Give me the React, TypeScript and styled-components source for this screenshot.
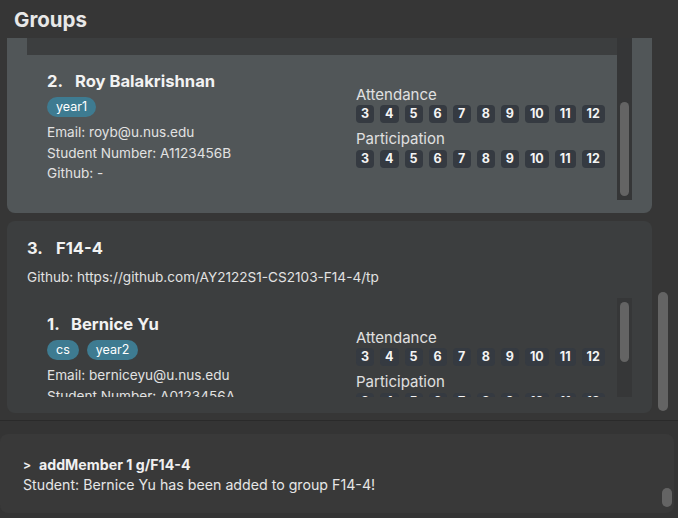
import React from 'react';
import styled, { createGlobalStyle } from 'styled-components';

const GlobalStyle = createGlobalStyle`
  html, body { margin: 0; padding: 0; background: #363636; }
  body { font-family: Inter, "Noto Sans", sans-serif; }
  * { box-sizing: border-box; }
`;

const Window = styled.div`
  width: 678px;
  height: 518px;
  display: flex;
  flex-direction: column;
  background: #363636;
  overflow: hidden;
  color: #e4e4e4;
`;

const Header = styled.div`
  height: 38px;
  flex: none;
  display: flex;
  align-items: center;
  padding-left: 14px;
  font-size: 20.5px;
  font-weight: 700;
  color: #e8e8e8;
`;

const ListViewport = styled.div`
  height: 382px;
  flex: none;
  display: flex;
  overflow: hidden;
`;

const Cards = styled.div`
  width: 652px;
  flex: none;
  padding-left: 7px;
  display: flex;
  flex-direction: column;
  gap: 8px;
`;

type Tone = 'odd' | 'even';
const toneBg = (t: Tone) => (t === 'odd' ? '#515658' : '#3c3e3f');

const GroupCard = styled.div<{ $tone: Tone; $clippedTop?: boolean }>`
  flex: none;
  background: ${(p) => toneBg(p.$tone)};
  border-radius: ${(p) => (p.$clippedTop ? '0 0 8px 8px' : '8px')};
  padding: ${(p) => (p.$clippedTop ? '0 20px 13px' : '17px 20px 16px')};
  display: flex;
  flex-direction: column;
`;

const GroupTitle = styled.div`
  font-size: 16.5px;
  line-height: 20px;
  font-weight: 700;
  color: #f2f2f2;
  display: flex;
`;

const Index = styled.span<{ $w: number }>`
  display: inline-block;
  width: ${(p) => p.$w}px;
`;

const GroupGithub = styled.div`
  font-size: 13.6px;
  line-height: 18px;
  margin-top: 10px;
  margin-bottom: 12px;
  color: #e2e2e2;
  white-space: nowrap;
`;

const InnerList = styled.div<{ $h: number }>`
  height: ${(p) => p.$h}px;
  display: flex;
  overflow: hidden;
  background: #3c3e3f;
`;

const MemberColumn = styled.div`
  flex: 1;
  display: flex;
  flex-direction: column;
  overflow: hidden;
`;

const PartialCell = styled.div<{ $tone: Tone; $h: number }>`
  flex: none;
  height: ${(p) => p.$h}px;
  background: ${(p) => toneBg(p.$tone)};
`;

const MemberCell = styled.div<{ $tone: Tone }>`
  flex: none;
  background: ${(p) => toneBg(p.$tone)};
  display: grid;
  grid-template-columns: 309px 1fr;
  padding: 16px 0 17px 20px;
`;

const MemberLeft = styled.div`
  display: flex;
  flex-direction: column;
`;

const MemberName = styled.div`
  font-size: 16.6px;
  line-height: 20px;
  font-weight: 700;
  color: #f2f2f2;
  display: flex;
`;

const Tags = styled.div`
  display: flex;
  gap: 8px;
  margin-top: 6px;
  margin-bottom: 5px;
`;

const Tag = styled.span`
  height: 20px;
  padding: 0 9px;
  border-radius: 10px;
  background: #3e7b91;
  color: #fff;
  font-size: 12.5px;
  line-height: 20px;
`;

const Detail = styled.div`
  font-size: 13.6px;
  line-height: 20.5px;
  color: #e2e2e2;
  white-space: nowrap;
`;

const MemberRight = styled.div`
  display: flex;
  flex-direction: column;
  padding-top: 15px;
`;

const SectionLabel = styled.div<{ $gap: number }>`
  font-size: 15px;
  line-height: 17px;
  color: #e0e0e0;
  margin-top: ${(p) => p.$gap}px;
`;

const Chips = styled.div<{ $gap: number }>`
  display: flex;
  gap: 6px;
  margin-top: ${(p) => p.$gap}px;
`;

const Chip = styled.span`
  height: 18px;
  min-width: 18px;
  padding: 0 5px;
  border-radius: 4px;
  background: #353a41;
  color: #f4f4f4;
  font-size: 12.5px;
  font-weight: 700;
  line-height: 18px;
  text-align: center;
`;

const Track = styled.div<{ $w: number; $bg: string }>`
  width: ${(p) => p.$w}px;
  flex: none;
  background: ${(p) => p.$bg};
  display: flex;
  flex-direction: column;
`;

const Thumb = styled.div<{ $top: number; $h: number; $w: number; $left: number }>`
  margin-top: ${(p) => p.$top}px;
  margin-left: ${(p) => p.$left}px;
  width: ${(p) => p.$w}px;
  height: ${(p) => p.$h}px;
  border-radius: ${(p) => p.$w / 2}px;
  background: #646464;
`;

const Divider = styled.div`
  height: 1px;
  flex: none;
  background: #2a2a2a;
`;

const ResultArea = styled.div`
  flex: 1;
  display: flex;
  padding: 13px 4px 5px 0;
  background: #343434;
`;

const ResultBox = styled.div`
  flex: 1;
  display: flex;
  background: #393939;
  border-radius: 8px;
`;

const ResultText = styled.div`
  flex: 1;
  padding: 21px 0 0 23px;
  font-size: 14.2px;
  line-height: 20px;
  color: #e6e6e6;
`;

const CommandLine = styled.div`
  font-weight: 700;
  color: #f0f0f0;
  display: flex;
`;

const Prompt = styled.span`
  width: 16px;
  font-size: 12px;
`;

const weeks = ['3', '4', '5', '6', '7', '8', '9', '10', '11', '12'];

const WeekChips: React.FC<{ gap: number }> = ({ gap }) => (
  <Chips $gap={gap}>
    {weeks.map((w) => (
      <Chip key={w}>{w}</Chip>
    ))}
  </Chips>
);

interface Member {
  idx: number;
  name: string;
  tags: string[];
  email: string;
  number: string;
  github: string;
}

const MemberView: React.FC<{ m: Member; tone: Tone; idxW: number }> = ({ m, tone, idxW }) => (
  <MemberCell $tone={tone}>
    <MemberLeft>
      <MemberName>
        <Index $w={idxW}>{m.idx}.</Index>
        <span>{m.name}</span>
      </MemberName>
      <Tags>
        {m.tags.map((t) => (
          <Tag key={t}>{t}</Tag>
        ))}
      </Tags>
      <Detail>Email: {m.email}</Detail>
      <Detail>Student Number: {m.number}</Detail>
      <Detail>Github: {m.github}</Detail>
    </MemberLeft>
    <MemberRight>
      <SectionLabel $gap={0}>Attendance</SectionLabel>
      <WeekChips gap={2} />
      <SectionLabel $gap={7}>Participation</SectionLabel>
      <WeekChips gap={3} />
    </MemberRight>
  </MemberCell>
);

const roy: Member = {
  idx: 2,
  name: 'Roy Balakrishnan',
  tags: ['year1'],
  email: 'royb@u.nus.edu',
  number: 'A1123456B',
  github: '-',
};

const bernice: Member = {
  idx: 1,
  name: 'Bernice Yu',
  tags: ['cs', 'year2'],
  email: 'berniceyu@u.nus.edu',
  number: 'A0123456A',
  github: '-',
};

export default function App() {
  return (
    <Window>
      <GlobalStyle />
      <Header>Groups</Header>
      <ListViewport>
        <Cards>
          <GroupCard $tone="odd" $clippedTop>
            <InnerList $h={162}>
              <MemberColumn>
                <PartialCell $tone="even" $h={17} />
                <MemberView m={roy} tone="odd" idxW={28} />
              </MemberColumn>
              <Track $w={15} $bg="#353637">
                <Thumb $top={64} $h={94} $w={9} $left={3} />
              </Track>
            </InnerList>
          </GroupCard>
          <GroupCard $tone="even">
            <GroupTitle>
              <Index $w={29}>3.</Index>
              <span>F14-4</span>
            </GroupTitle>
            <GroupGithub>Github: https://github.com/AY2122S1-CS2103-F14-4/tp</GroupGithub>
            <InnerList $h={99}>
              <MemberColumn>
                <MemberView m={bernice} tone="even" idxW={24} />
              </MemberColumn>
              <Track $w={15} $bg="#363738">
                <Thumb $top={4} $h={60} $w={9} $left={3} />
              </Track>
            </InnerList>
          </GroupCard>
        </Cards>
        <Track $w={26} $bg="transparent">
          <Thumb $top={254} $h={119} $w={10} $left={6} />
        </Track>
      </ListViewport>
      <Divider />
      <ResultArea>
        <ResultBox>
          <ResultText>
            <CommandLine>
              <Prompt>&gt;</Prompt>
              <span>addMember 1 g/F14-4</span>
            </CommandLine>
            <div>Student: Bernice Yu has been added to group F14-4!</div>
          </ResultText>
          <Track $w={12} $bg="transparent">
            <Thumb $top={54} $h={19} $w={10} $left={0} />
          </Track>
        </ResultBox>
      </ResultArea>
    </Window>
  );
}
